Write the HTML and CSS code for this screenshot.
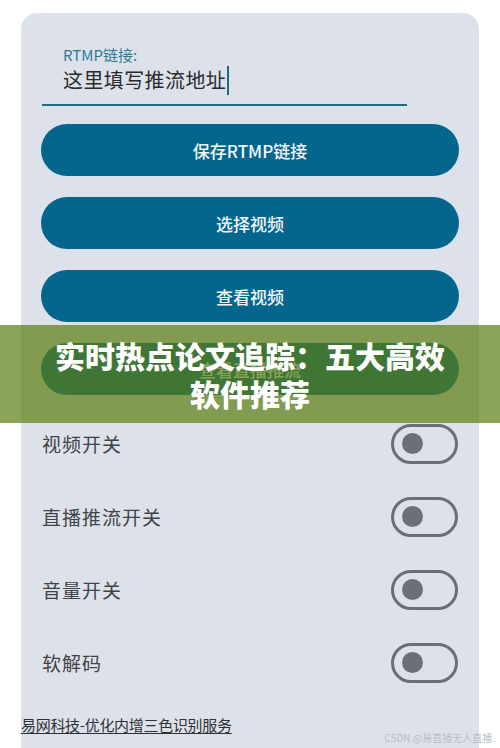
FILE: index.html
```html
<!DOCTYPE html>
<html lang="zh">
<head>
<meta charset="utf-8">
<title>RTMP</title>
<link rel="stylesheet" href="styles.css">
</head>
<body>
<div class="page">
  <div class="card">
    <div class="field">
      <div class="field-label">RTMP链接:</div>
      <div class="field-input"><span class="input-text">这里填写推流地址</span><span class="cursor"></span></div>
    </div>
    <div class="buttons">
      <div class="btn">保存RTMP链接</div>
      <div class="btn">选择视频</div>
      <div class="btn">查看视频</div>
      <div class="btn">查看直播推流</div>
    </div>
    <div class="switches">
      <div class="switch-row"><span class="switch-label">视频开关</span><span class="toggle"><span class="knob"></span></span></div>
      <div class="switch-row"><span class="switch-label">直播推流开关</span><span class="toggle"><span class="knob"></span></span></div>
      <div class="switch-row"><span class="switch-label">音量开关</span><span class="toggle"><span class="knob"></span></span></div>
      <div class="switch-row"><span class="switch-label">软解码</span><span class="toggle"><span class="knob"></span></span></div>
    </div>
    <div class="footer"><span class="footer-link">易网科技-优化内增三色识别服务</span></div>
  </div>
  <div class="banner">实时热点论文追踪：五大高效<br>软件推荐</div>
  <div class="watermark">CSDN @易直播无人直播.</div>
</div>
</body>
</html>
```

FILE: styles.css
```css
html, body {
  margin: 0;
  padding: 0;
  background: #ffffff;
}
body {
  font-family: "Noto Sans CJK SC", "Noto Sans", sans-serif;
  width: 500px;
  height: 748px;
  overflow: hidden;
}
.page {
  position: relative;
  width: 500px;
  height: 748px;
  padding: 13px 21px 0;
  box-sizing: border-box;
}
.card {
  background: #dde2ea;
  border-radius: 16px 16px 0 0;
  height: 735px;
  box-sizing: border-box;
  padding-top: 32px;
  display: flex;
  flex-direction: column;
}
.field {
  margin-left: 21px;
  width: 365px;
  border-bottom: 2px solid #1f6a8a;
  padding: 0 0 9px 21px;
  box-sizing: border-box;
}
.field-label {
  font-size: 15px;
  line-height: 19px;
  color: #2f7b99;
}
.field-input {
  display: flex;
  align-items: center;
  height: 30px;
  margin-top: 1px;
}
.input-text {
  font-size: 20px;
  letter-spacing: 0.4px;
  color: #2a2a2a;
  line-height: 30px;
}
.cursor {
  width: 2px;
  height: 29px;
  background: #1f6a8a;
  margin-left: 1px;
}
.buttons {
  margin: 18px 20px 0;
  display: flex;
  flex-direction: column;
  gap: 21px;
}
.btn {
  height: 52px;
  border-radius: 26px;
  background: #05668d;
  color: #f2f6f8;
  font-size: 17px;
  font-weight: 500;
  display: flex;
  align-items: center;
  justify-content: center;
}
.switches {
  margin: 12px 20px 0 21px;
  display: flex;
  flex-direction: column;
}
.switch-row {
  height: 73px;
  display: flex;
  align-items: center;
  justify-content: space-between;
}
.switch-label {
  font-size: 19px;
  letter-spacing: 1px;
  color: #404247;
}
.toggle {
  width: 67px;
  height: 40px;
  border: 3px solid #6c6e74;
  border-radius: 20px;
  box-sizing: border-box;
  display: flex;
  align-items: center;
  padding-left: 8px;
  margin-right: 1px;
}
.knob {
  width: 21px;
  height: 21px;
  border-radius: 50%;
  background: #6c6f78;
}
.footer {
  margin-top: 13px;
}
.footer-link {
  font-size: 15px;
  color: #2e3035;
  text-decoration: underline;
  text-underline-offset: 2px;
  letter-spacing: -0.3px;
}
.banner {
  position: absolute;
  left: 0;
  top: 325px;
  width: 500px;
  height: 98px;
  box-sizing: border-box;
  padding-top: 11px;
  background: rgba(90, 125, 15, 0.7);
  color: #ffffff;
  font-size: 30px;
  font-weight: 900;
  line-height: 38px;
  text-align: center;
}
.watermark {
  position: absolute;
  right: 5px;
  bottom: 3px;
  font-size: 10px;
  color: #b9bdc5;
  font-family: "Noto Sans CJK SC", sans-serif;
}
```
